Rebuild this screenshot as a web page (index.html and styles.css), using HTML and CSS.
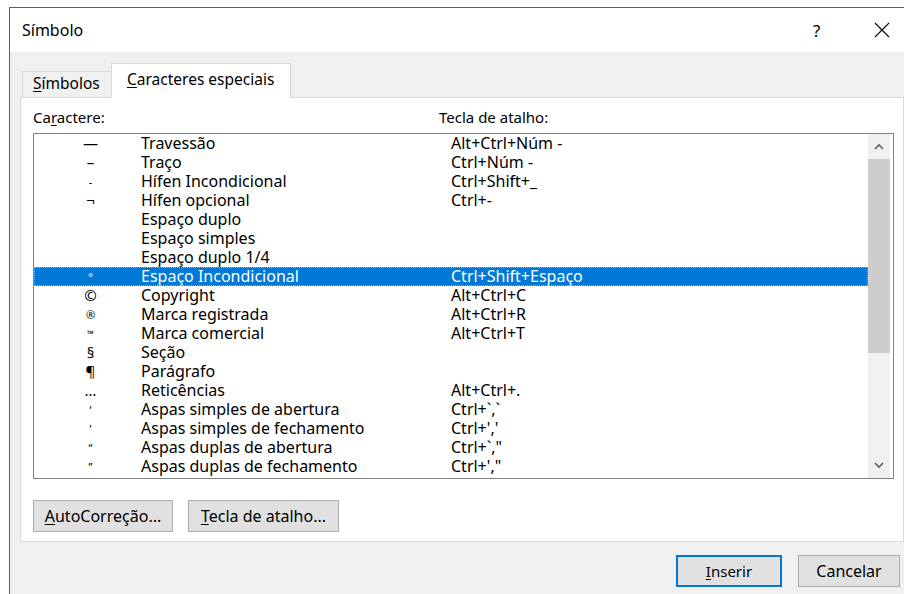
FILE: index.html
```html
<!DOCTYPE html>
<html lang="pt-BR">
<head>
<meta charset="utf-8">
<title>Símbolo</title>
<link rel="stylesheet" href="styles.css">
</head>
<body>
<div class="window">
  <div class="titlebar">
    <span class="title">Símbolo</span>
    <span class="help">?</span>
    <span class="close">
      <svg width="16" height="16" viewBox="0 0 16 16"><path d="M1 1 L15 15 M15 1 L1 15" stroke="#000" stroke-width="1.1" fill="none"/></svg>
    </span>
  </div>
  <div class="content">
    <div class="tabs">
      <div class="tab"><u>S</u>ímbolos</div>
      <div class="tab active"><u>C</u>aracteres especiais</div>
    </div>
    <div class="panel">
      <div class="headers">
        <span class="h-char">Ca<u>r</u>actere:</span>
        <span class="h-key">Tecla de atalho:</span>
      </div>
      <div class="listbox">
        <div class="rows">
          <div class="row"><span class="sym">—</span><span class="name">Travessão</span><span class="key">Alt+Ctrl+Núm -</span></div>
          <div class="row"><span class="sym">–</span><span class="name">Traço</span><span class="key">Ctrl+Núm -</span></div>
          <div class="row"><span class="sym small">-</span><span class="name">Hífen Incondicional</span><span class="key">Ctrl+Shift+_</span></div>
          <div class="row"><span class="sym">¬</span><span class="name">Hífen opcional</span><span class="key">Ctrl+-</span></div>
          <div class="row"><span class="sym"></span><span class="name">Espaço duplo</span><span class="key"></span></div>
          <div class="row"><span class="sym"></span><span class="name">Espaço simples</span><span class="key"></span></div>
          <div class="row"><span class="sym"></span><span class="name">Espaço duplo 1/4</span><span class="key"></span></div>
          <div class="row selected"><span class="sym small">°</span><span class="name">Espaço Incondicional</span><span class="key">Ctrl+Shift+Espaço</span></div>
          <div class="row"><span class="sym">©</span><span class="name">Copyright</span><span class="key">Alt+Ctrl+C</span></div>
          <div class="row"><span class="sym small">®</span><span class="name">Marca registrada</span><span class="key">Alt+Ctrl+R</span></div>
          <div class="row"><span class="sym tiny">™</span><span class="name">Marca comercial</span><span class="key">Alt+Ctrl+T</span></div>
          <div class="row"><span class="sym">§</span><span class="name">Seção</span><span class="key"></span></div>
          <div class="row"><span class="sym">¶</span><span class="name">Parágrafo</span><span class="key"></span></div>
          <div class="row"><span class="sym">…</span><span class="name">Reticências</span><span class="key">Alt+Ctrl+.</span></div>
          <div class="row"><span class="sym small">‘</span><span class="name">Aspas simples de abertura</span><span class="key">Ctrl+`,`</span></div>
          <div class="row"><span class="sym small">’</span><span class="name">Aspas simples de fechamento</span><span class="key">Ctrl+','</span></div>
          <div class="row"><span class="sym small">“</span><span class="name">Aspas duplas de abertura</span><span class="key">Ctrl+`,"</span></div>
          <div class="row"><span class="sym small">”</span><span class="name">Aspas duplas de fechamento</span><span class="key">Ctrl+',"</span></div>
        </div>
        <div class="scrollbar">
          <div class="arrow">
            <svg width="10" height="7" viewBox="0 0 10 7"><path d="M1 6 L5 2 L9 6" stroke="#606060" stroke-width="1.6" fill="none"/></svg>
          </div>
          <div class="track">
            <div class="thumb"></div>
          </div>
          <div class="arrow">
            <svg width="10" height="7" viewBox="0 0 10 7"><path d="M1 1 L5 5 L9 1" stroke="#606060" stroke-width="1.6" fill="none"/></svg>
          </div>
        </div>
      </div>
      <div class="panel-buttons">
        <button class="btn btn-auto"><u>A</u>utoCorreção...</button>
        <button class="btn btn-key"><u>T</u>ecla de atalho...</button>
      </div>
    </div>
    <div class="footer">
      <button class="btn btn-default"><u>I</u>nserir</button>
      <button class="btn btn-cancel">Cancelar</button>
    </div>
  </div>
</div>
</body>
</html>
```
FILE: styles.css
```css
html, body {
  margin: 0;
  padding: 0;
  background: #ffffff;
  overflow: hidden;
}

body {
  font-family: "Noto Sans", "Open Sans", sans-serif;
  font-size: 15px;
  color: #000;
}

u {
  text-decoration: underline;
  text-underline-offset: 2px;
}

.window {
  margin: 7px 0 0 9px;
  height: 587px;
  border-top: 1px solid #5f5f5f;
  border-left: 1px solid #5f5f5f;
  background: #f0f0f0;
  display: flex;
  flex-direction: column;
}

/* title bar */
.titlebar {
  height: 44px;
  background: #fff;
  display: flex;
  align-items: center;
  padding-left: 12px;
  flex-shrink: 0;
}

.title {
  font-size: 16px;
  flex: 1;
}

.help {
  font-size: 17px;
  width: 14px;
  margin-right: 47px;
}

.close {
  width: 16px;
  height: 16px;
  margin-right: 14px;
  display: flex;
}

/* body of the dialog */
.content {
  padding: 11px 0 0 10px;
  display: flex;
  flex-direction: column;
}

.tabs {
  display: flex;
  align-items: flex-end;
  height: 34px;
  padding-left: 2px;
  position: relative;
  z-index: 1;
}

.tab {
  height: 26px;
  box-sizing: border-box;
  padding: 0 0 4px 10px;
  border: 1px solid #d9d9d9;
  border-bottom: none;
  border-right: none;
  background: #f0f0f0;
  display: flex;
  align-items: center;
  width: 90px;
  font-size: 15.5px;
  white-space: nowrap;
}

.tab.active {
  height: 35px;
  width: 180px;
  background: #fff;
  border-right: 1px solid #d9d9d9;
  margin-left: -1px;
  margin-bottom: -1px;
  padding: 0 0 4px 15px;
}

.panel {
  height: 445px;
  box-sizing: border-box;
  border: 1px solid #d9d9d9;
  background: #fff;
  padding: 0 9px 0 12px;
  display: flex;
  flex-direction: column;
}

.headers {
  display: flex;
  height: 35px;
  align-items: center;
  padding-top: 2px;
  box-sizing: border-box;
}

.h-char {
  width: 406px;
}

/* list box */
.listbox {
  height: 346px;
  box-sizing: border-box;
  border: 1px solid #828282;
  display: flex;
}

.rows {
  flex: 1;
}

.row {
  height: 19px;
  display: grid;
  grid-template-columns: 107px 310px 1fr;
  align-items: center;
  line-height: 19px;
  font-size: 16px;
  box-sizing: border-box;
  white-space: nowrap;
}

.row .sym {
  text-align: center;
  padding-left: 6px;
  font-size: 15px;
}

.row .sym.small {
  font-size: 11px;
}

.row .sym.tiny {
  font-size: 9px;
}

.row.selected {
  background: #0078d7;
  color: #fff;
  outline: 1px dotted #d8a060;
  outline-offset: -1px;
}

.scrollbar {
  width: 22px;
  margin-right: 3px;
  background: #f0f0f0;
  display: flex;
  flex-direction: column;
}

.arrow {
  height: 25px;
  display: flex;
  align-items: center;
  justify-content: center;
}

.track {
  flex: 1;
}

.thumb {
  height: 194px;
  background: #cdcdcd;
}

.panel-buttons {
  display: flex;
  gap: 15px;
  padding-top: 21px;
}

.btn {
  font-family: inherit;
  font-size: 16px;
  color: #000;
  background: #e1e1e1;
  border: 1px solid #adadad;
  height: 32px;
  box-sizing: border-box;
  padding: 0;
  margin: 0;
}

.btn-auto {
  width: 140px;
}

.btn-key {
  width: 151px;
}

.footer {
  display: flex;
  justify-content: flex-end;
  gap: 16px;
  padding-top: 13px;
  padding-right: 4px;
}

.btn-default {
  width: 106px;
  border: 2px solid #0078d7;
  font-size: 15px;
}

.btn-cancel {
  width: 102px;
}
```
